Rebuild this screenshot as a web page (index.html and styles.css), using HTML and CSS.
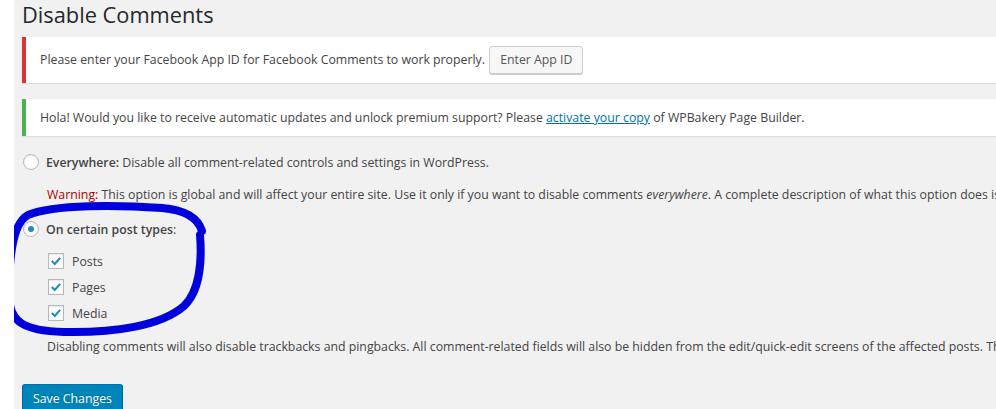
FILE: index.html
```html
<!DOCTYPE html>
<html>
<head>
  <meta charset="utf-8">
  <link rel="stylesheet" href="styles.css">
</head>
<body>
  <div class="screen">
    <div class="wrap">
      <h1>Disable Comments</h1>

      <div class="notice notice-error">
        Please enter your Facebook App ID for Facebook Comments to work properly.
        <button class="button">Enter App ID</button>
      </div>

      <div class="notice notice-success">
        Hola! Would you like to receive automatic updates and unlock premium support? Please <a href="#">activate your copy</a> of WPBakery Page Builder.
      </div>

      <form class="settings">
        <label class="option">
          <span class="radio"></span>
          <span><strong>Everywhere:</strong> Disable all comment-related controls and settings in WordPress.</span>
        </label>
        <p class="indent warning-line"><span class="warning">Warning:</span> This option is global and will affect your entire site. Use it only if you want to disable comments <em>everywhere</em>. A complete description of what this option does is available here.</p>

        <label class="option option-second">
          <span class="radio checked"></span>
          <span><strong>On certain post types</strong>:</span>
        </label>
        <ul class="types">
          <li><span class="checkbox"><svg viewBox="0 0 16 16" width="16" height="16"><polyline points="3.2,8 6.6,11.4 12.8,4.4" fill="none" stroke="#1e8cbe" stroke-width="2.4"/></svg></span>Posts</li>
          <li><span class="checkbox"><svg viewBox="0 0 16 16" width="16" height="16"><polyline points="3.2,8 6.6,11.4 12.8,4.4" fill="none" stroke="#1e8cbe" stroke-width="2.4"/></svg></span>Pages</li>
          <li><span class="checkbox"><svg viewBox="0 0 16 16" width="16" height="16"><polyline points="3.2,8 6.6,11.4 12.8,4.4" fill="none" stroke="#1e8cbe" stroke-width="2.4"/></svg></span>Media</li>
        </ul>
        <p class="indent description">Disabling comments will also disable trackbacks and pingbacks. All comment-related fields will also be hidden from the edit/quick-edit screens of the affected posts. These settings cannot be overridden for individual posts.</p>

        <button class="button button-primary" type="button">Save Changes</button>
      </form>
    </div>

    <svg class="scribble" width="220" height="150" viewBox="0 0 220 150">
      <path d="M198 31 C194 18, 182 10, 158 8 C115 5, 50 4, 24 15 C9 23, 5 55, 5 95 C5 122, 20 131, 60 132 C110 133, 157 126, 180 106 C196 91, 198 60, 196 35" fill="none" stroke="#0000dc" stroke-width="8" stroke-linecap="round" stroke-linejoin="round"/>
    </svg>
  </div>
</body>
</html>
```

FILE: styles.css
```css
body {
  margin: 0;
  background: #fff;
  overflow: hidden;
  font-family: "Open Sans", "Noto Sans", sans-serif;
  font-size: 12.3px;
  color: #444;
}

.screen {
  position: relative;
  margin-left: 14px;
  height: 409px;
  padding-left: 8px;
  background: #f1f1f1;
  overflow: hidden;
}

.wrap {
  width: 1300px;
}

h1 {
  margin: 0;
  font-size: 21.8px;
  font-weight: 400;
  line-height: 30px;
  color: #23282d;
}

.notice {
  background: #fff;
  border-left: 4px solid #fff;
  box-shadow: 0 1px 1px rgba(0,0,0,0.08);
  padding: 9px 14px;
  line-height: 19px;
}

.notice-error {
  margin-top: 7px;
  border-left-color: #dc3232;
  line-height: 28px;
}

.notice-success {
  margin-top: 16px;
  border-left-color: #46b450;
}

.notice a {
  color: #0073aa;
}

.button {
  display: inline-block;
  height: 28px;
  padding: 0 10px;
  margin-left: 1px;
  vertical-align: top;
  font-family: inherit;
  font-size: 12.3px;
  line-height: 26px;
  color: #555;
  background: #f7f7f7;
  border: 1px solid #ccc;
  border-radius: 3px;
  box-shadow: 0 1px 0 #ccc;
}

.settings {
  margin-top: 16px;
}

.option {
  display: flex;
  align-items: center;
  gap: 7px;
  height: 20px;
  padding-left: 1px;
}

.option strong {
  font-weight: 600;
}

.option-second {
  margin-top: 14px;
}

.radio {
  width: 14px;
  height: 14px;
  border: 1px solid #b4b9be;
  border-radius: 50%;
  background: #fff;
  box-shadow: inset 0 1px 2px rgba(0,0,0,0.1);
  display: flex;
  align-items: center;
  justify-content: center;
}

.radio.checked::after {
  content: "";
  width: 6px;
  height: 6px;
  border-radius: 50%;
  background: #1e8cbe;
}

.indent {
  margin: 0;
  padding-left: 25px;
  line-height: 20px;
  white-space: nowrap;
}

.warning-line {
  margin-top: 13px;
}

.warning {
  color: #a00;
}

.types {
  list-style: none;
  margin: 12px 0 0;
  padding-left: 26px;
}

.types li {
  display: flex;
  align-items: center;
  gap: 8px;
  height: 20px;
  margin-bottom: 6px;
}

.checkbox {
  width: 14px;
  height: 14px;
  border: 1px solid #b4b9be;
  background: #fff;
  box-shadow: inset 0 1px 2px rgba(0,0,0,0.1);
  display: flex;
  align-items: center;
  justify-content: center;
}

.checkbox svg {
  width: 14px;
  height: 14px;
}

.description {
  margin-top: 14px;
}

.button-primary {
  margin: 27px 0 0;
  height: 30px;
  background: #0085ba;
  border-color: #0073aa #006799 #006799;
  box-shadow: 0 1px 0 #006799;
  color: #fff;
  text-shadow: 0 -1px 1px #006799;
  line-height: 28px;
}

.scribble {
  position: absolute;
  left: -10px;
  top: 200px;
}
```
